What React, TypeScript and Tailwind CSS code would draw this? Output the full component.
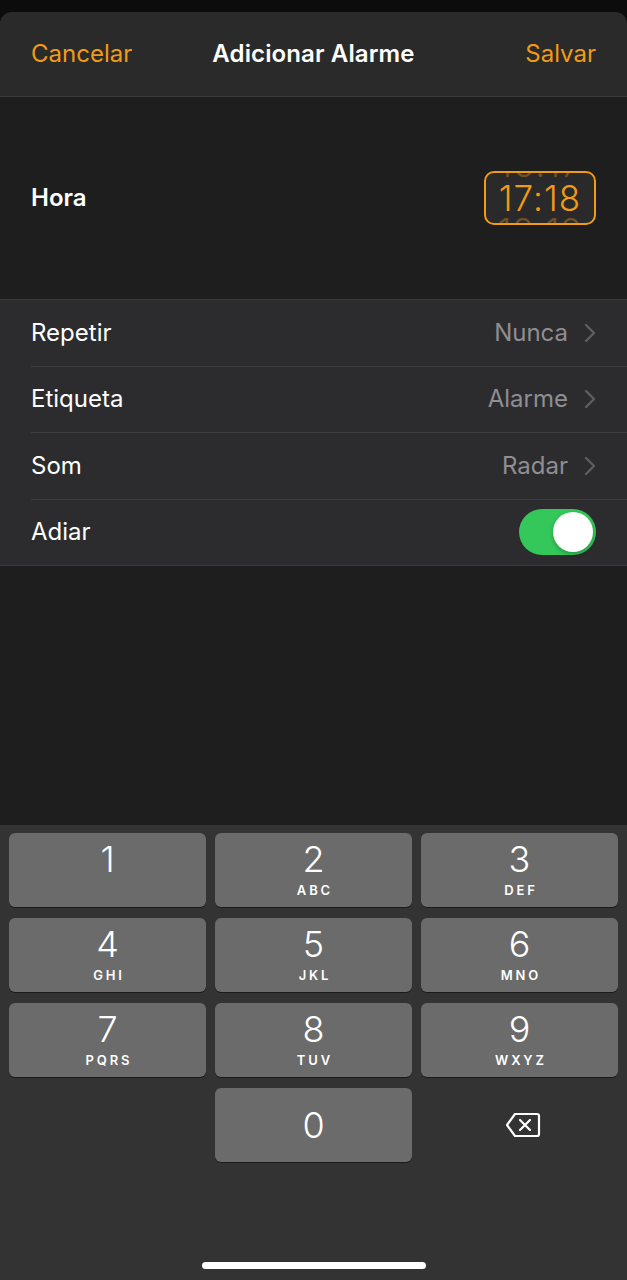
import React from 'react';

const rows = [
  { label: 'Repetir', value: 'Nunca' },
  { label: 'Etiqueta', value: 'Alarme' },
  { label: 'Som', value: 'Radar' },
];

const keys = [
  { d: '1', l: '' },
  { d: '2', l: 'ABC' },
  { d: '3', l: 'DEF' },
  { d: '4', l: 'GHI' },
  { d: '5', l: 'JKL' },
  { d: '6', l: 'MNO' },
  { d: '7', l: 'PQRS' },
  { d: '8', l: 'TUV' },
  { d: '9', l: 'WXYZ' },
];

const Chevron = () => (
  <svg width="12" height="20" viewBox="0 0 12 20" fill="none" className="ml-[16px]">
    <path d="M2 2l8 8-8 8" stroke="#5d5d62" strokeWidth="2.4" strokeLinecap="round" strokeLinejoin="round" />
  </svg>
);

const Backspace = () => (
  <svg width="36" height="26" viewBox="0 0 36 26" fill="none">
    <path
      d="M10 2h22a2 2 0 0 1 2 2v18a2 2 0 0 1-2 2H10L2 13z"
      stroke="white"
      strokeWidth="2.2"
      strokeLinejoin="round"
    />
    <path d="M15 8l10 10M25 8L15 18" stroke="white" strokeWidth="2.2" strokeLinecap="round" />
  </svg>
);

const Key: React.FC<{ d: string; l: string }> = ({ d, l }) => (
  <div className="h-[74px] rounded-[6px] bg-[#6b6b6b] shadow-[0_1px_0_#1a1a1a] flex flex-col items-center pt-[8px]">
    <span className="text-[36px] font-light leading-[36px] text-white">{d}</span>
    <span className="mt-[6px] h-[14px] text-[13px] font-semibold leading-[14px] tracking-[0.22em] pl-[0.22em] text-white">
      {l}
    </span>
  </div>
);

export default function App() {
  return (
    <div className="min-h-[1280px] w-full bg-[#0c0c0c] pt-[12px] flex flex-col font-['Inter','Liberation_Sans',sans-serif]">
      <div className="flex-1 flex flex-col rounded-t-[12px] overflow-hidden bg-[#1e1e1f]">
        {/* header */}
        <div className="h-[85px] shrink-0 bg-[#2a2a2b] border-b border-[#3a3a3c] px-[31px] grid grid-cols-[1fr_auto_1fr] items-center">
          <span className="text-[24px] text-[#f19b14] justify-self-start">Cancelar</span>
          <span className="text-[24px] font-semibold text-white tracking-[0.005em]">Adicionar Alarme</span>
          <span className="text-[24px] text-[#f19b14] justify-self-end">Salvar</span>
        </div>

        {/* time */}
        <div className="h-[202px] shrink-0 px-[31px] flex items-center justify-between">
          <span className="text-[24px] font-semibold text-white">Hora</span>
          <div className="w-[112px] h-[54px] rounded-[10px] border-2 border-[#f19b14] bg-[#2a2a2b] flex flex-col items-center justify-center overflow-hidden">
            <span className="text-[35px] font-light leading-[31px] tracking-[0.03em] text-[#f19b14] opacity-35">16:17</span>
            <span className="text-[35px] font-light leading-[36px] tracking-[0.03em] text-[#f19b14]">17:18</span>
            <span className="text-[35px] font-light leading-[31px] tracking-[0.03em] text-[#f19b14] opacity-35">18:19</span>
          </div>
        </div>

        {/* rows */}
        <div className="shrink-0 bg-[#2c2c2e] border-t border-b border-[#3a3a3c]">
          {rows.map((r) => (
            <div key={r.label} className="pl-[31px]">
              <div className="h-[66.5px] flex items-center justify-between pr-[31px] border-b border-[#3d3d40]">
                <span className="text-[24px] text-white">{r.label}</span>
                <div className="flex items-center">
                  <span className="text-[24px] text-[#8e8e93]">{r.value}</span>
                  <Chevron />
                </div>
              </div>
            </div>
          ))}
          <div className="h-[65px] pl-[31px] pr-[31px] flex items-center justify-between">
            <span className="text-[24px] text-white">Adiar</span>
            <div className="w-[77px] h-[46px] rounded-full bg-[#34c759] flex items-center justify-end pr-[3px]">
              <div className="w-[40px] h-[40px] rounded-full bg-white shadow-[0_2px_4px_rgba(0,0,0,0.25)]" />
            </div>
          </div>
        </div>

        <div className="flex-1" />

        {/* keypad */}
        <div className="h-[455px] shrink-0 bg-[#333333] px-[9px] pt-[8px] flex flex-col">
          <div className="grid grid-cols-3 gap-x-[9px] gap-y-[11px]">
            {keys.map((k) => (
              <Key key={k.d} d={k.d} l={k.l} />
            ))}
            <div />
            <div className="h-[74px] rounded-[6px] bg-[#6b6b6b] shadow-[0_1px_0_#1a1a1a] flex items-center justify-center">
              <span className="text-[36px] font-light text-white">0</span>
            </div>
            <div className="h-[74px] flex items-center justify-center pl-[6px]">
              <Backspace />
            </div>
          </div>
          <div className="flex-1" />
          <div className="flex justify-center pb-[11px]">
            <div className="w-[224px] h-[7px] rounded-full bg-white" />
          </div>
        </div>
      </div>
    </div>
  );
}
